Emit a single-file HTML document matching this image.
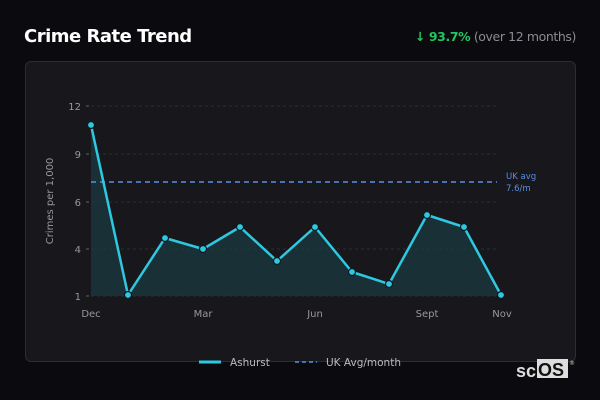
<!DOCTYPE html><html><head><style>
body{margin:0;width:600px;height:400px;background:#0b0b0f;font-family:"DejaVu Sans","Liberation Sans",sans-serif;overflow:hidden;position:relative}
.t{position:absolute;left:24px;top:26px;color:#fff;font-weight:bold;font-size:18px;letter-spacing:-0.5px}
.r{position:absolute;right:24px;top:29px;font-size:12.5px;color:#8a8a90;letter-spacing:-0.4px}
.r b{color:#22c55e}
.card{position:absolute;left:25px;top:61px;width:549px;height:299px;background:#17171c;border:1px solid #2c2c33;border-radius:6px}
</style></head><body>
<div class="t">Crime Rate Trend</div>
<div class="r"><b>↓ 93.7%</b> (over 12 months)</div>
<div class="card"></div>
<svg width="600" height="400" style="position:absolute;left:0;top:0" font-family="DejaVu Sans,Liberation Sans,sans-serif">
<g stroke="#2e2e35" stroke-dasharray="3,3" stroke-width="1">
<line x1="91" y1="106" x2="497" y2="106"/><line x1="91" y1="154" x2="497" y2="154"/><line x1="91" y1="202" x2="497" y2="202"/><line x1="91" y1="249" x2="497" y2="249"/><line x1="91" y1="296" x2="497" y2="296"/>
</g>
<g stroke="#666" stroke-width="1"><line x1="86" y1="106" x2="89" y2="106"/><line x1="86" y1="154" x2="89" y2="154"/><line x1="86" y1="202" x2="89" y2="202"/><line x1="86" y1="249" x2="89" y2="249"/><line x1="86" y1="296" x2="89" y2="296"/></g>
<g fill="#999" font-size="10" text-anchor="end"><text x="81" y="110">12</text><text x="81" y="158">9</text><text x="81" y="206">6</text><text x="81" y="253">4</text><text x="81" y="300">1</text></g>
<text transform="translate(53,201) rotate(-90)" fill="#999" font-size="10" text-anchor="middle">Crimes per 1,000</text>
<g fill="#999" font-size="10" text-anchor="middle"><text x="91" y="317">Dec</text><text x="203" y="317">Mar</text><text x="315" y="317">Jun</text><text x="427" y="317">Sept</text><text x="502" y="317">Nov</text></g>
<path d="M91,125 L128,295 165,238 203,249 240,227 277,261 315,227 352,272 389,284 427,215 464,227 501,295 L501,296 L91,296Z" fill="#1b3a40" fill-opacity="0.75"/>
<line x1="91" y1="182" x2="497" y2="182" stroke="#5b8fe0" stroke-width="1.5" stroke-dasharray="5,4"/>
<text x="506" y="179" fill="#5b8fe0" font-size="8.5">UK avg</text><text x="506" y="191" fill="#5b8fe0" font-size="8.5">7.6/m</text>
<polyline points="91,125 128,295 165,238 203,249 240,227 277,261 315,227 352,272 389,284 427,215 464,227 501,295" fill="none" stroke="#2ec8e0" stroke-width="2.5" stroke-linejoin="round"/>
<g fill="#2ec8e0" stroke="#0f1a1e" stroke-width="1.2">
<circle cx="91" cy="125" r="3.5"/><circle cx="128" cy="295" r="3.5"/><circle cx="165" cy="238" r="3.5"/><circle cx="203" cy="249" r="3.5"/><circle cx="240" cy="227" r="3.5"/><circle cx="277" cy="261" r="3.5"/><circle cx="315" cy="227" r="3.5"/><circle cx="352" cy="272" r="3.5"/><circle cx="389" cy="284" r="3.5"/><circle cx="427" cy="215" r="3.5"/><circle cx="464" cy="227" r="3.5"/><circle cx="501" cy="295" r="3.5"/></g>
<line x1="199" y1="362" x2="221" y2="362" stroke="#2ec8e0" stroke-width="3"/>
<text x="230" y="366" fill="#bbb" font-size="10.5">Ashurst</text>
<line x1="295" y1="362" x2="317" y2="362" stroke="#5b8fe0" stroke-width="1.5" stroke-dasharray="4,3"/>
<text x="326" y="366" fill="#bbb" font-size="10.5">UK Avg/month</text>
<text x="516" y="377" fill="#ddd" font-size="18" font-weight="bold" font-family="Liberation Sans,sans-serif">sc</text>
<rect x="537" y="359" width="31" height="19" fill="#ddd"/>
<text x="538" y="376" fill="#111" font-size="18" font-weight="bold" font-family="Liberation Sans,sans-serif">OS</text>
<text x="569" y="365" fill="#ccc" font-size="6">®</text>
</svg>
</body></html>
